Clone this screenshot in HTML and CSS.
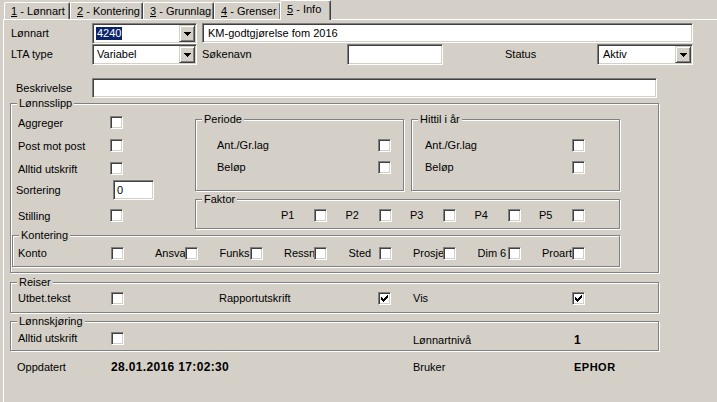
FILE: index.html
```html
<!DOCTYPE html>
<html lang="no">
<head>
<meta charset="utf-8">
<title>Lønnart – Info</title>
<link rel="stylesheet" href="styles.css">
</head>
<body>
<div class="tabs">
  <div class="tab t1"><u>1</u> - Lønnart</div>
  <div class="tab t2"><u>2</u> - Kontering</div>
  <div class="tab t3"><u>3</u> - Grunnlag</div>
  <div class="tab t4"><u>4</u> - Grenser</div>
  <div class="tab active"><u>5</u> - Info</div>
</div>
<div class="panel">
  <div class="row r1">
    <span class="flabel">Lønnart</span>
    <div class="combo sunken">
      <span class="ctext"><span class="sel">4240</span></span>
      <span class="btn"><svg width="7" height="4" viewBox="0 0 7 4" shape-rendering="crispEdges"><path d="M0 0h7v1H0zM1 1h5v1H1zM2 2h3v1H2zM3 3h1v1H3z" fill="#000"/></svg></span>
    </div>
    <div class="field sunken wide"><span class="ftext">KM-godtgjørelse fom 2016</span></div>
  </div>
  <div class="row r2">
    <span class="flabel">LTA type</span>
    <div class="combo sunken">
      <span class="ctext">Variabel</span>
      <span class="btn"><svg width="7" height="4" viewBox="0 0 7 4" shape-rendering="crispEdges"><path d="M0 0h7v1H0zM1 1h5v1H1zM2 2h3v1H2zM3 3h1v1H3z" fill="#000"/></svg></span>
    </div>
    <span class="flabel sok">Søkenavn</span>
    <div class="field sunken tall"></div>
    <span class="flabel status">Status</span>
    <div class="combo sunken">
      <span class="ctext aktiv">Aktiv</span>
      <span class="btn"><svg width="7" height="4" viewBox="0 0 7 4" shape-rendering="crispEdges"><path d="M0 0h7v1H0zM1 1h5v1H1zM2 2h3v1H2zM3 3h1v1H3z" fill="#000"/></svg></span>
    </div>
  </div>
  <div class="row r3">
    <span class="flabel besk">Beskrivelse</span>
    <div class="field sunken"></div>
  </div>

  <div class="group slipp">
    <span class="gtitle">Lønnsslipp</span>
    <div class="slipp-top">
      <div class="left">
        <div class="lrow"><span class="llabel">Aggreger</span><span class="cb"></span></div>
        <div class="lrow"><span class="llabel">Post mot post</span><span class="cb"></span></div>
        <div class="lrow"><span class="llabel">Alltid utskrift</span><span class="cb"></span></div>
        <div class="lrow sortrow"><span class="llabel sortlabel">Sortering</span><div class="field sunken sortfield"><span class="ftext">0</span></div></div>
        <div class="lrow stilrow"><span class="llabel">Stilling</span><span class="cb"></span></div>
      </div>
      <div class="right">
        <div class="subrow">
          <div class="group sub periode">
            <span class="gtitle">Periode</span>
            <div class="prow"><span class="plabel">Ant./Gr.lag</span><span class="cb"></span></div>
            <div class="prow"><span class="plabel">Beløp</span><span class="cb"></span></div>
          </div>
          <div class="group sub hittil">
            <span class="gtitle">Hittil i år</span>
            <div class="prow"><span class="plabel">Ant./Gr.lag</span><span class="cb"></span></div>
            <div class="prow"><span class="plabel">Beløp</span><span class="cb"></span></div>
          </div>
        </div>
        <div class="group faktor">
          <span class="gtitle">Faktor</span>
          <div class="pair"><span class="plab">P1</span><span class="cb"></span></div>
          <div class="pair"><span class="plab">P2</span><span class="cb"></span></div>
          <div class="pair"><span class="plab">P3</span><span class="cb"></span></div>
          <div class="pair"><span class="plab">P4</span><span class="cb"></span></div>
          <div class="pair"><span class="plab">P5</span><span class="cb"></span></div>
        </div>
      </div>
    </div>
    <div class="group kont">
      <span class="gtitle">Kontering</span>
      <div class="pair first"><span class="klab first-lab">Konto</span><span class="cb"></span></div>
      <div class="pair"><span class="klab">Ansva</span><span class="cb"></span></div>
      <div class="pair"><span class="klab">Funks</span><span class="cb"></span></div>
      <div class="pair"><span class="klab">Ressn</span><span class="cb"></span></div>
      <div class="pair"><span class="klab">Sted</span><span class="cb"></span></div>
      <div class="pair"><span class="klab">Prosje</span><span class="cb"></span></div>
      <div class="pair"><span class="klab">Dim 6</span><span class="cb"></span></div>
      <div class="pair"><span class="klab">Proart</span><span class="cb"></span></div>
    </div>
  </div>

  <div class="group wide-group reiser">
    <span class="gtitle">Reiser</span>
    <span class="rlab first-lab">Utbet.tekst</span><span class="cb"></span>
    <span class="rlab mid">Rapportutskrift</span><span class="cb checked"><svg width="7" height="7" viewBox="0 0 7 7" shape-rendering="crispEdges"><path d="M0 2h1v3H0zM1 3h1v3H1zM2 4h1v3H2zM3 3h1v3H3zM4 2h1v3H4zM5 1h1v3H5zM6 0h1v3H6z" fill="#000"/></svg></span>
    <span class="rlab last">Vis</span><span class="cb checked"><svg width="7" height="7" viewBox="0 0 7 7" shape-rendering="crispEdges"><path d="M0 2h1v3H0zM1 3h1v3H1zM2 4h1v3H2zM3 3h1v3H3zM4 2h1v3H4zM5 1h1v3H5zM6 0h1v3H6z" fill="#000"/></svg></span>
  </div>

  <div class="group wide-group kjoring">
    <span class="gtitle">Lønnskjøring</span>
    <span class="rlab first-lab">Alltid utskrift</span><span class="cb"></span>
    <span class="rlab nivaa">Lønnartnivå</span><span class="bold nivaa-val">1</span>
  </div>

  <div class="meta">
    <span class="mlab">Oppdatert</span>
    <span class="bold mdate">28.01.2016 17:02:30</span>
    <span class="mlab bruker">Bruker</span>
    <span class="bold muser">EPHOR</span>
  </div>
</div>
</body>
</html>
```

FILE: styles.css
```css
* { box-sizing: border-box; }

body {
  margin: 0;
  width: 717px;
  height: 402px;
  overflow: hidden;
  background: #d4d0c8;
  color: #000;
  font: 11px "Liberation Sans", Arial, sans-serif;
}

/* ---------- tabs ---------- */
.tabs {
  display: flex;
  align-items: flex-end;
  height: 19px;
  padding-left: 4px;
}
.tab {
  height: 17px;
  line-height: 16px;
  padding-left: 6px;
  white-space: nowrap;
  border-top: 1px solid #fff;
  border-left: 1px solid #fff;
  border-right: 1px solid #404040;
  border-radius: 2px 2px 0 0;
  box-shadow: inset -1px 0 0 #808080;
}
.t1 { width: 66px; }
.t2 { width: 73px; }
.t3 { width: 71px; }
.t4 { width: 67px; }
.tab.active {
  position: relative;
  z-index: 1;
  width: 51px;
  height: 20px;
  margin-left: -1px;
  margin-bottom: -1px;
  background: #d4d0c8;
}

/* ---------- panel ---------- */
.panel {
  margin-left: 3px;
  height: 383px;
  padding-top: 3px;
  border-top: 1px solid #fff;
  border-left: 1px solid #fff;
}

.row { display: grid; align-items: start; }
.r1 { grid-template-columns: 88px 105px 496px; height: 21px; }
.r2 { grid-template-columns: 88px 105px 150px 96px 154px 96px; height: 21px; }
.r3 { grid-template-columns: 88px 565px; margin-top: 13px; height: 20px; }

.flabel { padding-left: 7px; line-height: 21px; white-space: nowrap; }
.flabel.sok { padding-left: 5px; }
.flabel.status { padding-left: 62px; }
.flabel.besk { padding-left: 12px; line-height: 20px; }

.sunken {
  background: #fff;
  border: 1px solid;
  border-color: #808080 #fff #fff #808080;
  box-shadow: inset 1px 1px 0 #404040, inset -1px -1px 0 #d4d0c8;
}

.field { height: 20px; }
.field.tall { height: 21px; }
.field.wide { margin-left: 5px; }
.ftext { display: block; padding-left: 5px; line-height: 18px; white-space: nowrap; }

.combo {
  height: 21px;
  padding: 1px;
  display: flex;
  justify-content: space-between;
  align-items: flex-start;
}
.ctext { padding-left: 3px; line-height: 17px; white-space: nowrap; }
.ctext.aktiv { padding-left: 4px; }
.sel {
  display: inline-block;
  margin-left: -1px;
  padding: 0 1px;
  line-height: 13px;
  background: #0a246a;
  color: #fff;
}
.btn {
  width: 16px;
  height: 17px;
  display: flex;
  align-items: center;
  justify-content: center;
  background: #d4d0c8;
  border: 1px solid;
  border-color: #d4d0c8 #404040 #404040 #d4d0c8;
  box-shadow: inset 1px 1px 0 #fff, inset -1px -1px 0 #808080;
}
.btn svg { display: block; }

/* ---------- checkbox ---------- */
.cb {
  flex: none;
  width: 13px;
  height: 13px;
  display: flex;
  align-items: center;
  justify-content: center;
  background: #fff;
  border: 1px solid;
  border-color: #808080 #fff #fff #808080;
  box-shadow: inset 1px 1px 0 #404040, inset -1px -1px 0 #d4d0c8;
}
.cb svg { display: block; }

/* ---------- group boxes ---------- */
.group {
  position: relative;
  border: 1px solid #808080;
  box-shadow: inset 1px 1px 0 #fff, 1px 1px 0 #fff;
}
.gtitle {
  position: absolute;
  top: -7px;
  left: 6px;
  padding: 0 2px;
  line-height: 13px;
  background: #d4d0c8;
  white-space: nowrap;
}

.slipp {
  margin: 5px 0 0 6px;
  width: 649px;
  height: 170px;
}
.slipp-top {
  display: grid;
  grid-template-columns: 184px 425px;
  height: 125px;
}
.left {
  padding-top: 7px;
  display: grid;
  grid-template-rows: 23px 23px 23px 20px 29px;
}
.lrow { display: flex; align-items: center; }
.llabel { width: 99px; padding-left: 7px; white-space: nowrap; }
.sortlabel { width: 102px; padding-left: 5px; }
.sortfield { width: 41px; height: 20px; }
.sortfield .ftext { padding-left: 3px; }
.stilrow { padding-top: 2px; }

.right { padding-top: 15px; }
.subrow { display: flex; gap: 7px; }
.sub { width: 209px; height: 72px; padding-top: 14px; }
.prow { display: flex; align-items: center; height: 22px; }
.periode .plabel { width: 182px; padding-left: 21px; }
.hittil .plabel { width: 160px; padding-left: 13px; }

.faktor {
  margin-top: 8px;
  width: 425px;
  height: 30px;
  padding: 3px 0 0 85px;
  display: flex;
  align-items: center;
  gap: 18.5px;
}
.pair { display: flex; align-items: center; line-height: 13px; }
.plab { width: 33px; }

.kont {
  margin: 6px 0 0 1px;
  width: 608px;
  height: 32px;
  padding: 11px 0 0 5px;
  display: flex;
  align-items: flex-start;
  gap: 21.5px;
}
.klab { width: 30px; overflow: hidden; white-space: nowrap; }
.klab.first-lab { width: 93px; }
.pair.first { margin-right: 9.5px; }

.wide-group {
  width: 649px;
  margin-left: 6px;
  display: flex;
  align-items: flex-start;
  line-height: 13px;
}
.reiser { margin-top: 9px; height: 31px; padding: 9px 0 0 7px; }
.kjoring { margin-top: 8px; height: 30px; padding: 10px 0 0 7px; }
.rlab { white-space: nowrap; }
.rlab.first-lab { width: 93px; }
.rlab.mid { width: 159px; margin-left: 95px; }
.rlab.last { width: 159px; margin-left: 22px; }
.rlab.nivaa { width: 161px; margin-left: 289px; margin-top: 2px; }
.nivaa-val { margin-top: 2px; font-size: 12px; }

.bold { font-weight: 700; white-space: nowrap; }

.meta {
  display: flex;
  margin-top: 10px;
  padding-left: 13px;
  line-height: 13px;
}
.mlab { width: 94px; }
.mdate { width: 302px; font-size: 12px; letter-spacing: 0.35px; }
.mlab.bruker { width: 161px; }
.muser { letter-spacing: 0.5px; }
```
